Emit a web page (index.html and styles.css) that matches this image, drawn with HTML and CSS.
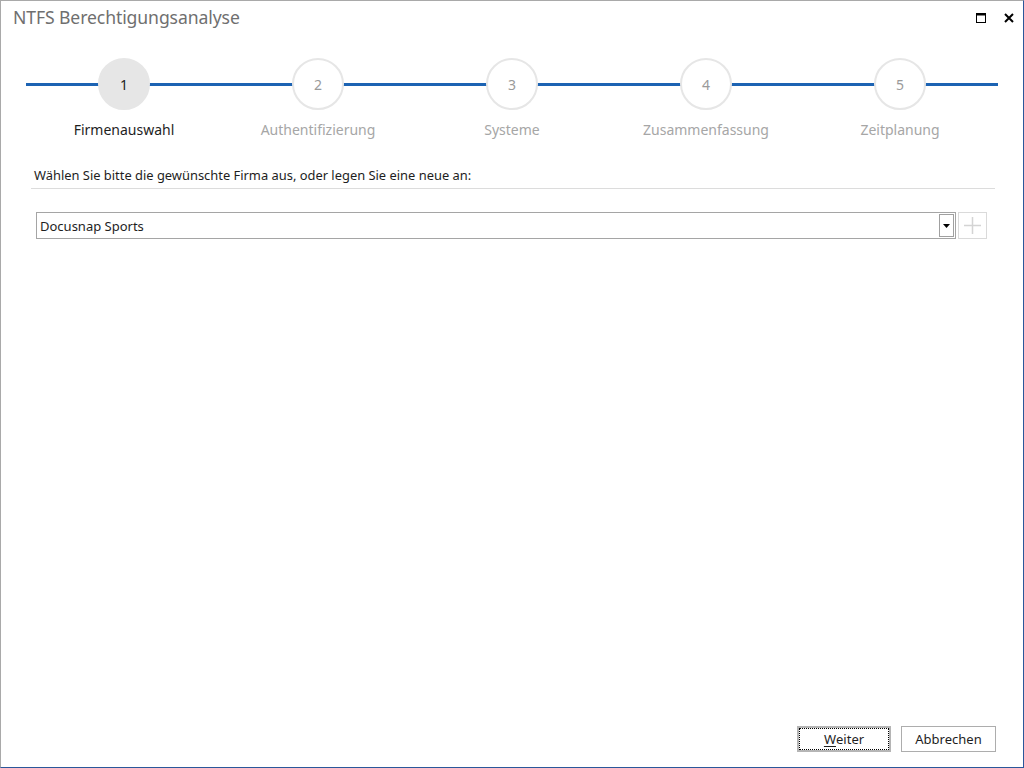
FILE: index.html
```html
<!DOCTYPE html>
<html lang="de">
<head>
<meta charset="utf-8">
<title>NTFS Berechtigungsanalyse</title>
<link rel="stylesheet" href="styles.css">
</head>
<body>
<div class="window">
  <div class="titlebar">
    <span class="title">NTFS Berechtigungsanalyse</span>
    <div class="winbtns">
      <svg class="wbtn" width="12" height="12" viewBox="0 0 12 12"><rect x="1.5" y="1.5" width="9" height="9" fill="none" stroke="#000" stroke-width="1"/><rect x="1" y="1" width="10" height="2.5" fill="#000"/></svg>
      <svg class="wbtn" width="12" height="12" viewBox="0 0 12 12"><path d="M2 2 L10 10 M10 2 L2 10" stroke="#000" stroke-width="2"/></svg>
    </div>
  </div>

  <div class="stepper">
    <div class="step active"><div class="circle">1</div><div class="label">Firmenauswahl</div></div>
    <div class="step"><div class="circle">2</div><div class="label">Authentifizierung</div></div>
    <div class="step"><div class="circle">3</div><div class="label">Systeme</div></div>
    <div class="step"><div class="circle">4</div><div class="label">Zusammenfassung</div></div>
    <div class="step"><div class="circle">5</div><div class="label">Zeitplanung</div></div>
  </div>

  <div class="content">
    <div class="instruction">Wählen Sie bitte die gewünschte Firma aus, oder legen Sie eine neue an:</div>
    <div class="separator"></div>
    <div class="combo-row">
      <div class="combo">
        <span class="combo-text">Docusnap Sports</span>
        <span class="combo-drop"><svg width="7" height="4" viewBox="0 0 7 4"><path d="M0 0 H7 L3.5 4 Z" fill="#000"/></svg></span>
      </div>
      <div class="plus-btn"><svg width="19" height="19" viewBox="0 0 19 19"><path d="M9.5 1 V18 M1 9.5 H18" stroke="#d4d4d4" stroke-width="1.5"/></svg></div>
    </div>
  </div>

  <div class="footer">
    <button class="btn default"><span class="focus"><u>W</u>eiter</span></button>
    <button class="btn cancel">Abbrechen</button>
  </div>
</div>
</body>
</html>
```

FILE: styles.css
```css
html, body {
  margin: 0;
  padding: 0;
  background: #fff;
}

.window {
  width: 1024px;
  height: 768px;
  box-sizing: border-box;
  border-top: 1px solid #a9a9a9;
  border-left: 1px solid #a9a9a9;
  border-right: 1px solid #2b579a;
  border-bottom: 1px solid #2b579a;
  display: flex;
  flex-direction: column;
  font-family: "Noto Sans", "Open Sans", sans-serif;
  color: #1e1e1e;
}

.titlebar {
  height: 32px;
  display: flex;
  align-items: center;
  justify-content: space-between;
  padding-left: 12px;
  padding-right: 8px;
}

.title {
  font-size: 17.6px;
  color: #6f6f6f;
  letter-spacing: -0.1px;
}

.winbtns {
  display: flex;
  gap: 16px;
  align-items: center;
  margin-top: 1px;
}

.wbtn {
  display: block;
}

.stepper {
  position: relative;
  display: grid;
  grid-template-columns: repeat(5, 194px);
  margin: 25px 0 0 26px;
  width: 970px;
}

.stepper::before {
  content: "";
  position: absolute;
  left: -1px;
  right: -1px;
  top: 25px;
  height: 3px;
  background: #1c63b3;
}

.step {
  display: flex;
  flex-direction: column;
  align-items: center;
  position: relative;
}

.circle {
  width: 52px;
  height: 52px;
  box-sizing: border-box;
  border-radius: 50%;
  border: 2px solid #e6e6e6;
  background: #fff;
  display: flex;
  align-items: center;
  justify-content: center;
  font-size: 14px;
  color: #9a9a9a;
  position: relative;
}

.step.active .circle {
  background: #e6e6e6;
  color: #222;
}

.label {
  margin-top: 10px;
  font-size: 14px;
  line-height: 20px;
  color: #a6a6a6;
}

.step.active .label {
  color: #1e1e1e;
}

.content {
  padding: 0 28px 0 30px;
  margin-top: 27px;
  flex: 1;
}

.instruction {
  font-size: 12.9px;
  line-height: 17px;
  padding-left: 3px;
}

.separator {
  height: 1px;
  background: #dcdcdc;
  margin-top: 4px;
}

.combo-row {
  display: flex;
  gap: 2px;
  margin-top: 23px;
  margin-left: 5px;
  margin-right: 8px;
}

.combo {
  flex: 1;
  height: 27px;
  box-sizing: border-box;
  border: 1px solid #a5a5a5;
  display: flex;
  align-items: center;
  justify-content: space-between;
  padding: 1px 1px 1px 3px;
}

.combo-text {
  font-size: 13px;
  color: #1e1e1e;
}

.combo-drop {
  width: 15px;
  height: 23px;
  box-sizing: border-box;
  border: 1px solid #a0a0a0;
  display: flex;
  align-items: center;
  justify-content: center;
}

.plus-btn {
  width: 29px;
  height: 27px;
  box-sizing: border-box;
  border: 1px solid #dadada;
  display: flex;
  align-items: center;
  justify-content: center;
}

.footer {
  display: flex;
  justify-content: flex-end;
  gap: 10px;
  padding: 0 27px 15px 0;
}

.btn {
  width: 94px;
  height: 26px;
  box-sizing: border-box;
  border: 1px solid #adadad;
  background: #fff;
  font-family: "Noto Sans", "Open Sans", sans-serif;
  font-size: 13px;
  color: #1e1e1e;
  padding: 0;
  display: flex;
  align-items: center;
  justify-content: center;
}

.btn.cancel {
  width: 95px;
}

.btn.default {
  border: 2px solid #b5b5b5;
  padding: 0;
}

.btn.default .focus {
  display: flex;
  align-items: center;
  justify-content: center;
  width: 100%;
  height: 100%;
  box-sizing: border-box;
  border: 1px dotted #000;
}

.btn u {
  text-decoration-thickness: 1px;
  text-underline-offset: 2px;
}
```
